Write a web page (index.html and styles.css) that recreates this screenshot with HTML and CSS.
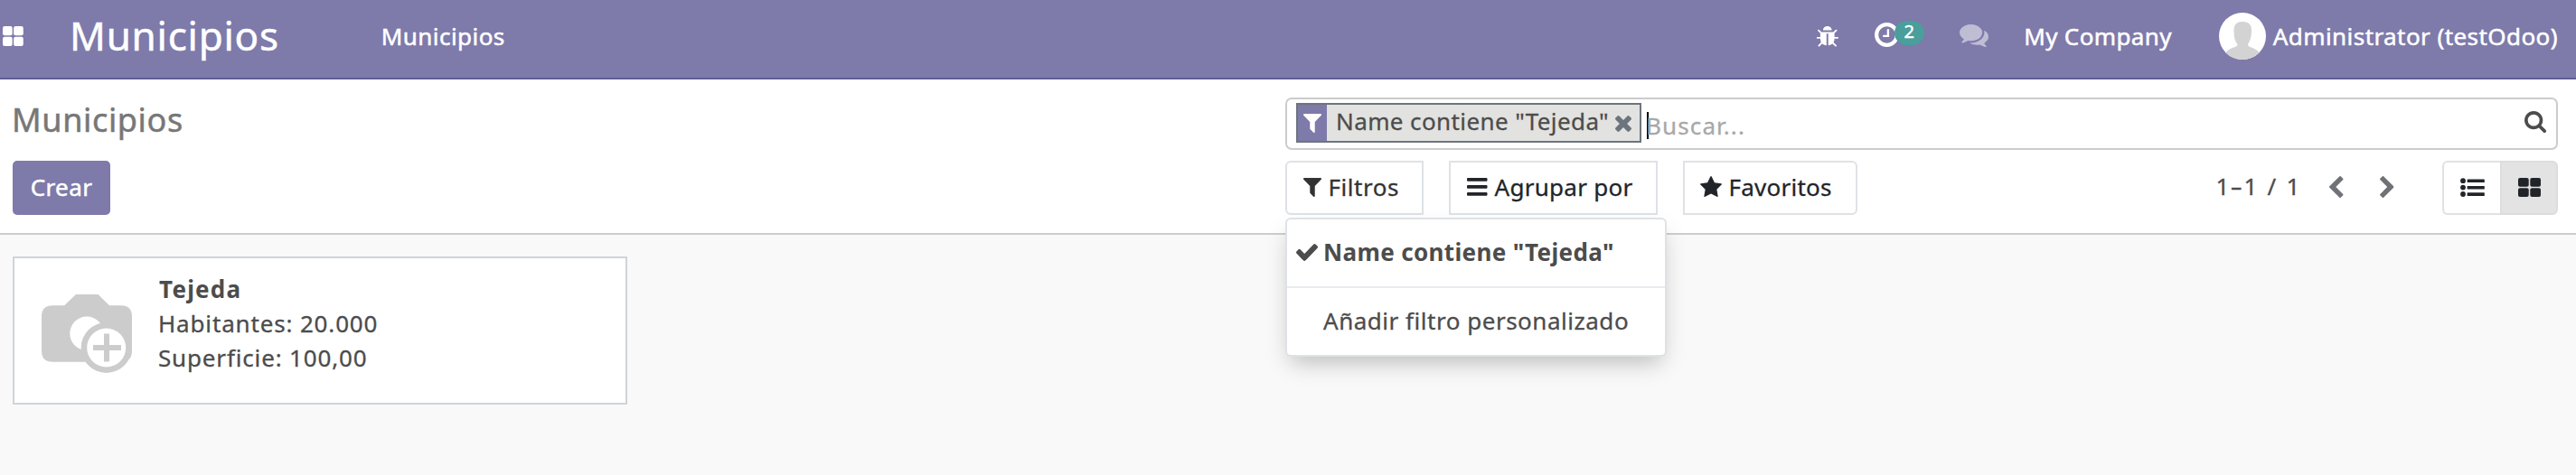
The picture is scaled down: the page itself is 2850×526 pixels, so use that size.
FILE: index.html
```html
<!DOCTYPE html>
<html lang="es">
<head>
<meta charset="utf-8">
<title>Municipios</title>
<link rel="stylesheet" href="styles.css">
</head>
<body>
<header class="navbar">
  <svg class="apps" viewBox="0 0 25 24"><rect width="11.600" height="11.200" rx="2.200"/><rect x="13.200" width="11.600" height="11.200" rx="2.200"/><rect y="12.800" width="11.600" height="11.200" rx="2.200"/><rect x="13.200" y="12.800" width="11.600" height="11.200" rx="2.200"/></svg>
  <span class="brand">Municipios</span>
  <nav class="menu">Municipios</nav>
  <div class="systray">
    <svg class="bug" viewBox="128 64 1568 1600" preserveAspectRatio="none"><path d="M1696 960q0 26-19 45t-45 19h-224q0 171-67 290l208 209q19 19 19 45t-19 45q-18 19-45 19t-45-19l-198-197q-5 5-15 13t-42 28.500-65 36.500-82 29-97 13v-896h-128v896q-51 0-101.500-13.500t-87-33-66-39-43.500-32.500l-15-14-183 207q-20 21-48 21-24 0-43-17-19-18-20.500-44.500t15.500-46.500l202-227q-58-114-58-274h-224q-26 0-45-19t-19-45 19-45 45-19h224v-294l-173-173q-19-19-19-45t19-45 45-19 45 19l173 173h844l173-173q19-19 45-19t45 19 19 45-19 45l-173 173v294h224q26 0 45 19t19 45zm-480-576h-640q0-133 93.500-226.500t226.500-93.500 226.500 93.500 93.500 226.500z"/></svg>
    <div class="activity">
      <svg class="clock" viewBox="0 0 27 27"><circle cx="13.500" cy="13.500" r="11.400"/><path d="M14.900 7.200v7.700H9.200"/></svg>
      <span class="badge">2</span>
    </div>
    <svg class="chat" viewBox="0 256 1792 1408" preserveAspectRatio="none"><path d="M1408 768q0 139-94 257t-256.500 186.500-353.500 68.500q-86 0-176-16-124 88-278 128-36 9-86 16h-3q-11 0-20.500-8t-11.500-21q-1-3-1-6.500t.5-6.500 2-6l2.500-5 3.500-5.500 4-5 4.500-5 4-4.500q5-6 23-25t26-29.500 22.500-29 25-38.500 20.500-44q-124-72-195-177t-71-224q0-139 94-257t256.500-186.500 353.500-68.500 353.500 68.500 256.500 186.500 94 257zm384 256q0 120-71 224.500t-195 176.500q10 24 20.500 44t25 38.500 22.500 29 26 29.500 23 25q1 1 4 4.500t4.500 5 4 5 3.500 5.500l2.500 5 2 6 .5 6.500-1 6.500q-3 14-13 22t-22 7q-50-7-86-16-154-40-278-128-90 16-176 16-271 0-472-132 58 4 88 4 161 0 309-45t264-129q125-92 192-212t67-254q0-77-23-152 129 71 204 178t75 230z"/></svg>
    <span class="company">My Company</span>
    <svg class="avatar" viewBox="0 0 52 52"><clipPath id="face"><circle cx="26" cy="26" r="26"/></clipPath><circle class="avatar-bg" cx="26" cy="26" r="26"/><path class="avatar-fg" clip-path="url(#face)" d="M16.500 19Q16.500 10 26 10Q36 10 36 19C36 27 34.500 31 32 35Q32 37.500 36 38.500Q42 40.500 45.500 45V52H6.500V45Q10 40.500 16 38.500Q20.500 37.500 20.500 35C17.500 31 16.500 27 16.500 19Z"/></svg>
    <span class="user">Administrator (testOdoo)</span>
  </div>
</header>

<section class="panel">
  <h1 class="title">Municipios</h1>
  <div class="search">
    <div class="facet">
      <span class="facet-icon"><svg class="funnel" viewBox="192 256 1408 1408" preserveAspectRatio="none"><path d="M1595 295q17 41-14 70l-493 493v742q0 42-39 59-13 5-25 5-27 0-45-19l-256-256q-19-19-19-45v-486l-493-493q-31-29-14-70 17-39 59-39h1280q42 0 59 39z"/></svg></span>
      <span class="facet-text">Name contiene "Tejeda"</span>
      <svg class="remove" viewBox="302 366 1188 1188" preserveAspectRatio="none"><path d="M1490 1322q0 40-28 68l-136 136q-28 28-68 28t-68-28l-294-294-294 294q-28 28-68 28t-68-28l-136-136q-28-28-28-68t28-68l294-294-294-294q-28-28-28-68t28-68l136-136q28-28 68-28t68 28l294 294 294-294q28-28 68-28t68 28l136 136q28 28 28 68t-28 68l-294 294 294 294q28 28 28 68z"/></svg>
    </div>
    <span class="caret"></span>
    <span class="placeholder">Buscar...</span>
    <svg class="magnifier" viewBox="64 128 1664 1664" preserveAspectRatio="none"><path d="M1216 832q0-185-131.500-316.500t-316.500-131.500-316.500 131.500-131.500 316.500 131.500 316.500 316.500 131.500 316.500-131.500 131.500-316.500zm512 832q0 52-38 90t-90 38q-54 0-90-38l-343-342q-179 124-399 124-143 0-273.500-55.500t-225-150-150-225-55.500-273.500 55.500-273.500 150-225 225-150 273.500-55.500 273.500 55.500 225 150 150 225 55.500 273.500q0 220-124 399l343 343q37 37 37 90z"/></svg>
  </div>
  <div class="actions"><button class="create">Crear</button></div>
  <div class="tools">
    <div class="dropdown">
      <button class="tool filters"><svg class="funnel" viewBox="192 256 1408 1408" preserveAspectRatio="none"><path d="M1595 295q17 41-14 70l-493 493v742q0 42-39 59-13 5-25 5-27 0-45-19l-256-256q-19-19-19-45v-486l-493-493q-31-29-14-70 17-39 59-39h1280q42 0 59 39z"/></svg><span>Filtros</span></button>
      <div class="popup">
        <div class="item selected"><svg class="check" viewBox="121 334 1550 1188" preserveAspectRatio="none"><path d="M1671 566q0 40-28 68l-724 724-136 136q-28 28-68 28t-68-28l-136-136-362-362q-28-28-28-68t28-68l136-136q28-28 68-28t68 28l294 295 656-657q28-28 68-28t68 28l136 136q28 28 28 68z"/></svg><span>Name contiene "Tejeda"</span></div>
        <div class="item custom"><span>Añadir filtro personalizado</span></div>
      </div>
    </div>
    <button class="tool group"><svg class="bars" viewBox="0 0 22.500 20"><rect width="22.500" height="3.800" rx="1"/><rect y="8" width="22.500" height="3.800" rx="1"/><rect y="16" width="22.500" height="3.800" rx="1"/></svg><span>Agrupar por</span></button>
    <button class="tool favorites"><svg class="star" viewBox="64 32 1664 1587" preserveAspectRatio="none"><path d="M1728 647q0 22-26 48l-363 354 86 500q1 7 1 20 0 21-10.500 35.500t-30.500 14.500q-19 0-40-12l-449-236-449 236q-22 12-40 12-21 0-31.500-14.500t-10.500-35.500q0-6 2-20l86-500-364-354q-25-27-25-48 0-37 56-46l502-73 225-455q19-41 49-41t49 41l225 455 502 73q56 9 56 46z"/></svg><span>Favoritos</span></button>
    <span class="pager">1<span class="dash">-</span>1 / 1</span>
    <svg class="chevron prev" viewBox="410 26 1036 1612" preserveAspectRatio="none"><path d="M1427 301l-531 531 531 531q19 19 19 45t-19 45l-166 166q-19 19-45 19t-45-19l-742-742q-19-19-19-45t19-45l742-742q19-19 45-19t45 19l166 166q19 19 19 45t-19 45z"/></svg>
    <svg class="chevron next" viewBox="410 26 1036 1612" preserveAspectRatio="none"><path d="M1427 301l-531 531 531 531q19 19 19 45t-19 45l-166 166q-19 19-45 19t-45-19l-742-742q-19-19-19-45t19-45l742-742q19-19 45-19t45 19l166 166q19 19 19 45t-19 45z"/></svg>
    <div class="switcher">
      <div class="view list"><svg viewBox="0 0 27 21"><circle cx="3" cy="3.200" r="2.900"/><circle cx="3" cy="10.600" r="2.900"/><circle cx="3" cy="18" r="2.900"/><rect x="7.600" y="1.500" width="19.200" height="3.600" rx=".5"/><rect x="7.600" y="8.900" width="19.200" height="3.600" rx=".5"/><rect x="7.600" y="16.300" width="19.200" height="3.600" rx=".5"/></svg></div>
      <div class="view kanban"><svg viewBox="0 0 25 21"><rect width="11.700" height="9.800" rx="2"/><rect x="13.300" width="11.700" height="9.800" rx="2"/><rect y="11.200" width="11.700" height="9.800" rx="2"/><rect x="13.300" y="11.200" width="11.700" height="9.800" rx="2"/></svg></div>
    </div>
  </div>
</section>

<main class="content">
  <article class="card">
    <svg class="camera" viewBox="0 0 100 88"><path class="gray" d="M12.300 12.300H25.200L38 0H62.500L75 12.300H87.700Q100 12.300 100 24.600V62.400Q100 74.700 87.700 74.700H12.300Q0 74.700 0 62.400V24.600Q0 12.300 12.300 12.300Z"/><circle class="hole" cx="50" cy="43.300" r="18.700"/><circle class="gray" cx="71.700" cy="59" r="28"/><circle class="hole" cx="71.700" cy="59" r="21.500"/><path class="gray" d="M69 43.500h6v12.500h13v6H75v12.500h-6V62H57v-6h12z"/></svg>
    <div class="details">
      <strong class="name">Tejeda</strong>
      <span class="line">Habitantes: 20.000</span>
      <span class="line">Superficie: 100,00</span>
    </div>
  </article>
</main>
</body>
</html>
```
FILE: styles.css
```css
* { box-sizing: border-box; }
body {
  margin: 0;
  min-height: 526px;
  background: #f9f9f9;
  color: #4c4c4c;
  font: 26px/38px "Noto Sans", "Open Sans", sans-serif;
  -webkit-text-stroke: .3px;
  white-space: nowrap;
  overflow: hidden;
}
svg { display: block; flex: none; fill: currentColor; }
button { font: inherit; }

/* Top bar */
.navbar {
  display: flex;
  height: 88px;
  padding: 0 20px 0 2px;
  background: #7e7aaa;
  border-bottom: 2px solid #5f5e97;
  color: #fff;
  -webkit-text-stroke: .5px;
}
.apps { width: 25px; height: 22px; margin-top: 29px; }
.brand { margin-left: 50px; padding-top: 20px; font-size: 44px; letter-spacing: .76px; }
.menu { margin-left: 113px; padding-top: 21px; letter-spacing: .44px; }
.systray { display: flex; margin-left: auto; }
.bug { width: 24px; height: 23px; margin-top: 29px; }
.activity { position: relative; width: 56px; margin-left: 40px; }
.clock { width: 27px; height: 27px; margin-top: 25px; }
.clock circle { fill: none; stroke: #fff; stroke-width: 4.200; }
.clock path { fill: none; stroke: #fff; stroke-width: 2.400; }
.badge {
  position: absolute;
  left: 22px;
  top: 23px;
  width: 33px;
  height: 27px;
  border-radius: 13.500px;
  background: #4a9e9c;
  font-size: 20px;
  line-height: 23px;
  text-align: center;
}
.chat { width: 32px; height: 25px; margin: 27px 0 0 38.500px; opacity: .5; }
.company { margin-left: 39px; padding-top: 21px; letter-spacing: .36px; }
.avatar { width: 52px; height: 52px; margin: 14px 8px 0 52px; }
.avatar-bg { fill: #fff; }
.avatar-fg { fill: #d3d3d3; }
.user { padding-top: 21px; letter-spacing: .43px; }

/* Control panel */
.panel {
  display: grid;
  grid-template: 58px 60px / 1408px 1fr;
  row-gap: 12px;
  height: 172px;
  padding: 20px 20px 20px 14px;
  background: #fff;
  border-bottom: 2px solid #ccc;
}
.title {
  margin: 0 0 0 -1px;
  padding-top: 6px;
  color: #777;
  font-size: 36px;
  font-weight: 400;
  letter-spacing: .64px;
  line-height: 38px;
  -webkit-text-stroke: .5px;
}
.search {
  display: flex;
  border: 2px solid #ccc;
  border-radius: 7px;
  padding: 4px 11px 0 10px;
}
.facet {
  display: flex;
  width: 382px;
  height: 44px;
  padding-right: 9px;
  border: 2px solid #6c757d;
  background: #e2e2e0;
}
.facet-icon { width: 32px; padding: 10px 6px; background: #7e7aaa; color: #fff; }
.funnel { width: 20px; height: 21px; }
.facet-text { margin-left: 10px; line-height: 36px; letter-spacing: .4px; }
.remove { width: 18px; height: 18px; margin: 12px 0 0 auto; color: #6c757d; }
.caret { width: 2px; height: 30px; margin: 10px -3px 0 6px; background: #000; }
.placeholder { padding-top: 6px; color: #a8a8a8; letter-spacing: 1.120px; }
.magnifier { width: 24px; height: 24px; margin: 9px 0 0 auto; }

.create {
  width: 108px;
  height: 60px;
  padding: 0 0 2px;
  border: 0;
  border-radius: 5px;
  background: #7e7aaa;
  color: #fff;
  letter-spacing: .4px;
  -webkit-text-stroke: .5px;
}
.tools { display: flex; }
.dropdown { position: relative; margin-right: 28px; }
.tool {
  display: flex;
  align-items: center;
  height: 60px;
  padding: 0 0 2px 18px;
  border: 2px solid #dee2e6;
  background: #fff;
  color: #212529;
}
.tool.filters { width: 153px; border-radius: 6px 0 0 6px; letter-spacing: .54px; color: #333; }
.filters span { margin-left: 7.500px; }
.tool.group { width: 231px; margin-right: 28px; letter-spacing: .28px; }
.bars { width: 22.500px; height: 20px; }
.group span { margin-left: 8px; }
.tool.favorites { width: 193px; padding-left: 17px; border-radius: 0 6px 6px 0; letter-spacing: .24px; }
.star { width: 24px; height: 23px; margin-top: -2px; }
.favorites span { margin-left: 7.500px; }

/* Filter menu */
.popup {
  position: absolute;
  z-index: 1;
  top: 63px;
  left: 0;
  width: 422px;
  height: 154px;
  border: 2px solid #dee2e6;
  border-radius: 6px;
  background: #fff;
  box-shadow: 0 12px 24px -6px rgba(0, 0, 0, .25);
}
.item { display: flex; align-items: center; height: 76px; padding: 0 0 4px 10px; }
.item.selected { border-bottom: 2px solid #e9ecef; padding-bottom: 2px; font-weight: 700; letter-spacing: .36px; -webkit-text-stroke: 0; }
.item.custom { padding-left: 40px; letter-spacing: .52px; }
.check { width: 24px; height: 19px; margin-right: 6px; }

.pager { margin-left: auto; padding-top: 9px; letter-spacing: 2.200px; }
.dash { display: inline-block; margin: 0 .5px 0 1.700px; letter-spacing: 0; transform: scaleX(1.600); margin-right: 3.900px; }
.chevron { width: 15.500px; height: 24px; margin-top: 17px; color: #6f7276; }
.prev { margin-left: 30.500px; }
.next { margin-left: 40px; transform: scaleX(-1); }
.switcher { display: flex; width: 128px; margin-left: 54px; }
.view { display: flex; align-items: center; justify-content: center; width: 64px; border: 2px solid #dee2e6; color: #212529; }
.list { border-right: 0; border-radius: 6px 0 0 6px; }
.list svg { width: 27px; height: 21px; }
.kanban { border-color: #dcdddf; border-radius: 0 6px 6px 0; background: #e3e3e3; }
.kanban svg { width: 25px; height: 21px; }
.view svg { margin-bottom: 2px; }

/* Records */
.content { padding: 24px 14px; }
.card {
  display: flex;
  width: 680px;
  height: 164px;
  padding: 15px 30px;
  border: 2px solid #ced4da;
  background: #fff;
}
.camera { width: 100px; height: 88px; margin-top: 25px; }
.gray { fill: #ccc; }
.hole { fill: #fff; }
.details { display: flex; flex-direction: column; margin-left: 29px; }
.name { margin-left: 1px; letter-spacing: 1.220px; -webkit-text-stroke: 0; }
.line { letter-spacing: .84px; }
```
